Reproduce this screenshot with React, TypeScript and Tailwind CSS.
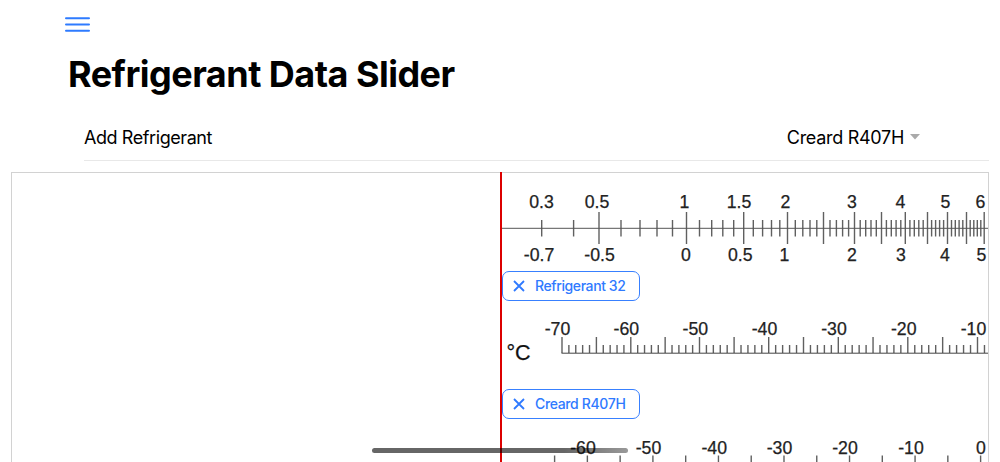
import type { ReactNode } from 'react';

type Tick = { x: number; top: number; bottom: number };
type Label = { x: number; y: number; text: string };

// Pressure scale: every fifth tick from the first major one is a long one
const PRESSURE_TICKS = [
  599, 621, 640, 657, 672.5, 686.5, 699.5, 711.7, 722.8, 733.7, 743.7, 753.3, 762.6, 771.5, 779.8,
  787.5, 795.3, 802.8, 810, 816.8, 823.5, 830, 836.4, 842.6, 848.6, 854.5, 860.2, 865.7, 871, 876.3,
  881.5, 886.4, 891.3, 896.1, 900.8, 905.3, 909.9, 914.3, 918.8, 923.2, 927.5, 931.6, 935.6, 939.6,
  943.6, 947.5, 951.5, 955.3, 959.1, 962.8, 966.5, 970.2, 973.8, 977.3, 980.8, 984.2,
];

const PRESSURE_LABELS: Label[] = [
  { x: 541.5, y: 208, text: '0.3' },
  { x: 597, y: 208, text: '0.5' },
  { x: 684.5, y: 208, text: '1' },
  { x: 739, y: 208, text: '1.5' },
  { x: 785.3, y: 208, text: '2' },
  { x: 852, y: 208, text: '3' },
  { x: 900.5, y: 208, text: '4' },
  { x: 945.5, y: 208, text: '5' },
  { x: 980.5, y: 208, text: '6' },
  { x: 539, y: 261.3, text: '-0.7' },
  { x: 599.5, y: 261.3, text: '-0.5' },
  { x: 686, y: 261.3, text: '0' },
  { x: 740.3, y: 261.3, text: '0.5' },
  { x: 784.3, y: 261.3, text: '1' },
  { x: 852, y: 261.3, text: '2' },
  { x: 901, y: 261.3, text: '3' },
  { x: 945, y: 261.3, text: '4' },
  { x: 981.5, y: 261.3, text: '5' },
];

const R32_DECADES = [562, 630.8, 699.5, 768.7, 838.3, 907.8, 977.5, 1047.2];
const R32_LABELS: Label[] = [
  { x: 557.5, y: 335, text: '-70' },
  { x: 626.3, y: 335, text: '-60' },
  { x: 695.3, y: 335, text: '-50' },
  { x: 764.5, y: 335, text: '-40' },
  { x: 834, y: 335, text: '-30' },
  { x: 903.7, y: 335, text: '-20' },
  { x: 973.5, y: 335, text: '-10' },
];

const R407H_LABELS: Label[] = [
  { x: 583, y: 454, text: '-60' },
  { x: 648.5, y: 454, text: '-50' },
  { x: 714.2, y: 454, text: '-40' },
  { x: 779.5, y: 454, text: '-30' },
  { x: 845, y: 454, text: '-20' },
  { x: 911, y: 454, text: '-10' },
  { x: 981, y: 454, text: '0' },
];

const pressureTicks: Tick[] = [
  { x: 541.7, top: 220, bottom: 236.5 },
  { x: 573.6, top: 220, bottom: 236.5 },
  ...PRESSURE_TICKS.map((x, i) =>
    i % 5 === 0 ? { x, top: 212, bottom: 244 } : { x, top: 220, bottom: 236.5 }
  ),
];

const r32Ticks: Tick[] = R32_DECADES.slice(0, -1).flatMap((start, i) => {
  const step = (R32_DECADES[i + 1] - start) / 10;
  return Array.from({ length: 10 }, (_, n) => ({
    x: start + n * step,
    top: n % 5 === 0 ? 337 : 345,
    bottom: 353,
  }));
});

const r407hTicks: Tick[] = Array.from({ length: 14 }, (_, n) => ({
  x: 554.6 + n * 32.77,
  top: 455.5,
  bottom: 470,
}));

interface ScaleProps {
  top: number;
  height: number;
  ticks: Tick[];
  labels: Label[];
  children?: ReactNode;
}

function Scale({ top, height, ticks, labels, children }: ScaleProps) {
  return (
    <svg
      className="block shrink-0 font-['Liberation_Sans',Arial,sans-serif]"
      width={486}
      height={height}
      viewBox={`502 ${top} 486 ${height}`}
    >
      {ticks.map((t) => (
        <line key={t.x} x1={t.x} x2={t.x} y1={t.top} y2={t.bottom} stroke="#606060" strokeWidth={1.4} />
      ))}
      {labels.map((l) => (
        <text
          key={`${l.text}-${l.y}`}
          x={l.x}
          y={l.y}
          fontSize={17.7}
          textAnchor="middle"
          fill="#222"
          stroke="#222"
          strokeWidth={0.25}
        >
          {l.text}
        </text>
      ))}
      {children}
    </svg>
  );
}

function Chip({ children }: { children: ReactNode }) {
  return (
    <button className="flex h-[30px] w-[138px] shrink-0 items-center rounded-[7px] border border-[#3880ff] pl-[10px] text-[#2f7aff]">
      <svg className="mr-[10px] shrink-0" width="12" height="12" viewBox="0 0 12 12">
        <path d="M1 1 11 11M11 1 1 11" stroke="currentColor" strokeWidth="1.8" />
      </svg>
      {children}
    </button>
  );
}

export default function App() {
  return (
    <div className="flex h-[462px] w-[1000px] flex-col overflow-hidden bg-white font-[Inter,sans-serif] text-black">
      {/* Header */}
      <header className="flex h-[114px] shrink-0 flex-col pl-[65px] pt-[17px]">
        <button className="flex h-[15px] w-[25px] flex-col justify-between text-[#2e7bff]">
          <svg width="25" height="15" viewBox="0 0 25 15" stroke="currentColor" strokeWidth="2" strokeLinecap="round">
            <path d="M1 1.3H24M1 7.5H24M1 13.8H24" />
          </svg>
        </button>
        <h1 className="ml-[3px] mt-[18px] whitespace-nowrap text-[36px] font-bold leading-[48px] tracking-[-0.52px]">
          Refrigerant Data Slider
        </h1>
      </header>

      {/* Refrigerant picker */}
      <div className="ml-[84px] mr-[11px] flex h-[47px] shrink-0 items-center justify-between border-b border-[#e8e8e8] pr-[69px] text-[18px]">
        <span className="whitespace-nowrap tracking-[-0.42px]">Add Refrigerant</span>
        <div className="flex items-center gap-[6px]">
          <span className="whitespace-nowrap tracking-[-0.3px]">Creard R407H</span>
          <svg width="10" height="6" viewBox="0 0 10 6">
            <path d="M0 0H10L5 5.5Z" fill="#aaa" />
          </svg>
        </div>
      </div>

      {/* Slider */}
      <div className="relative mx-[11px] mt-[11px] flex h-[290px] shrink-0 overflow-hidden border-x border-[#d2d2d2]">
        <div className="w-[488px] shrink-0 border-t border-[#d2d2d2]" />
        <div className="w-[2px] shrink-0 bg-[#dc0000]" />
        <div className="flex flex-col border-t border-[#d2d2d2]">
          <Scale top={173} height={98} ticks={pressureTicks} labels={PRESSURE_LABELS}>
            <line x1={502} x2={988} y1={228.3} y2={228.3} stroke="#555" />
          </Scale>
          <Chip>
            <span className="-mt-px whitespace-nowrap text-[14px] font-medium tracking-[-0.4px]">Refrigerant 32</span>
          </Chip>
          <Scale top={301} height={88} ticks={r32Ticks} labels={R32_LABELS}>
            <line x1={561.5} x2={988} y1={353.2} y2={353.2} stroke="#444" />
            <text x={506.5} y={360} fontSize={21.5} fill="#111" stroke="#111" strokeWidth={0.25}>
              °C
            </text>
          </Scale>
          <Chip>
            <span className="-mt-px whitespace-nowrap text-[14px] font-medium tracking-[-0.35px]">Creard R407H</span>
          </Chip>
          <Scale top={419} height={43} ticks={r407hTicks} labels={R407H_LABELS} />
        </div>
        {/* Scroll indicator */}
        <div className="absolute left-[360px] top-[275.5px] h-[5.5px] w-[256px] rounded-full bg-linear-to-r from-black/60 from-75% to-black/40" />
      </div>
    </div>
  );
}
